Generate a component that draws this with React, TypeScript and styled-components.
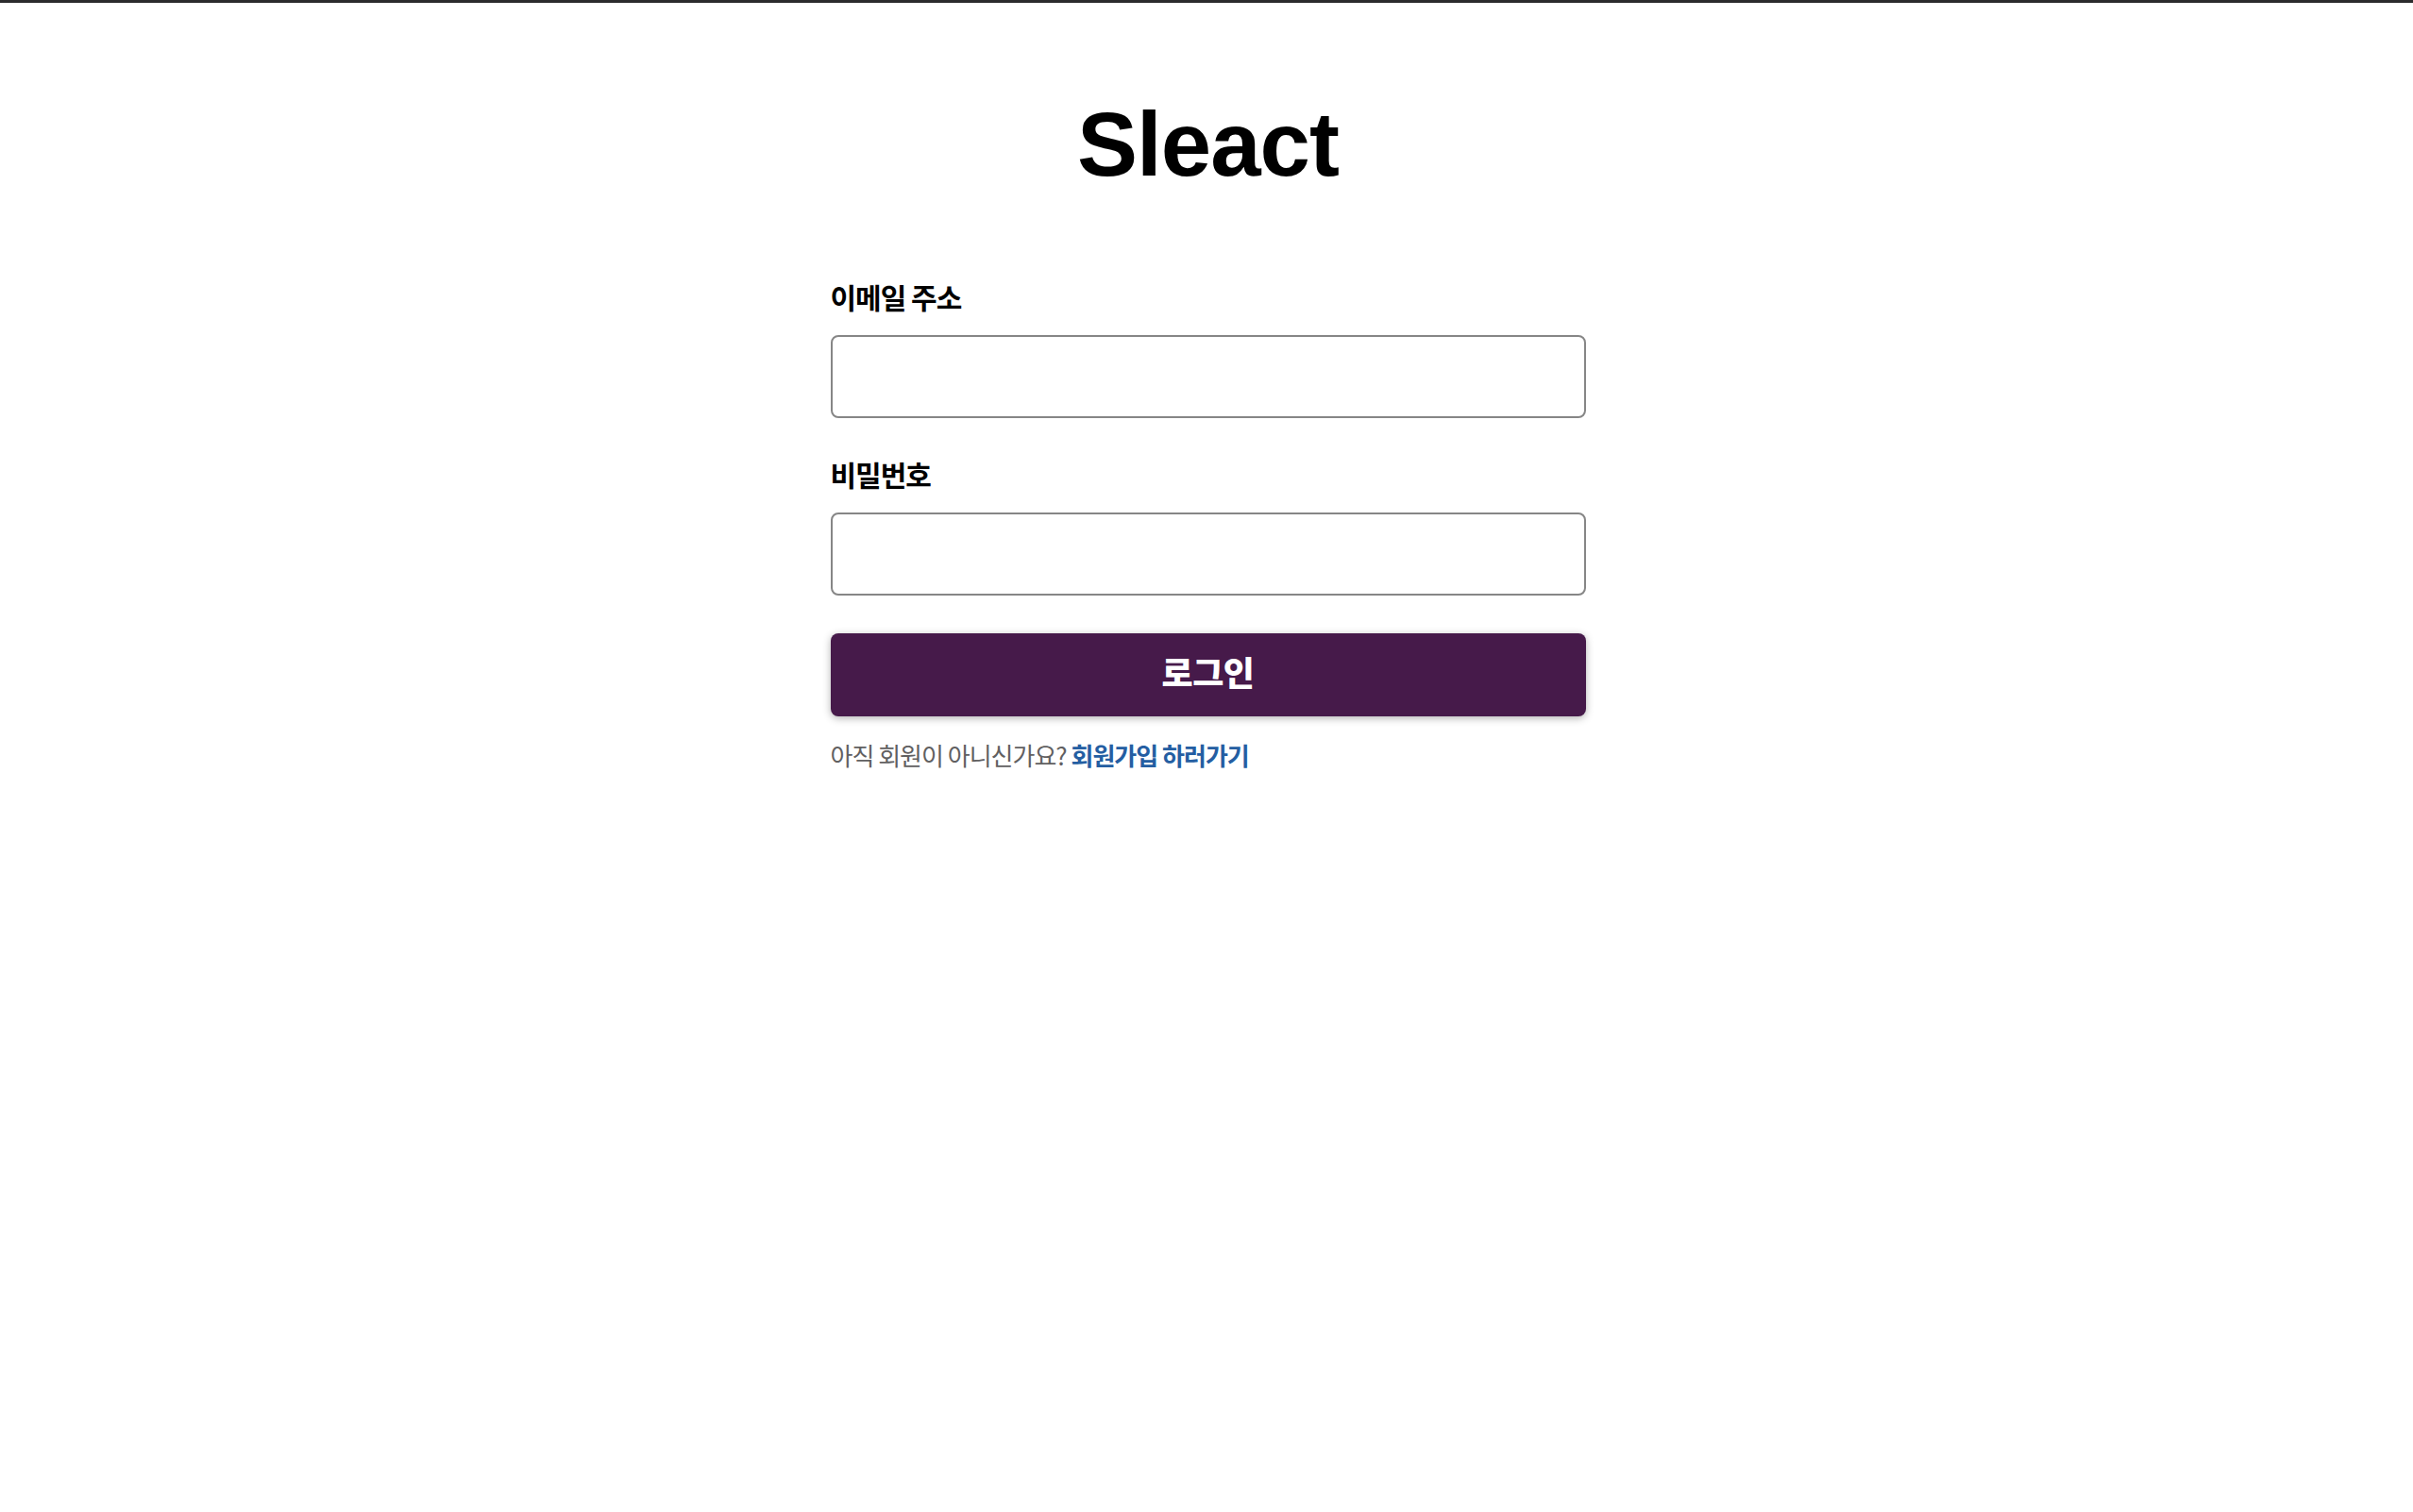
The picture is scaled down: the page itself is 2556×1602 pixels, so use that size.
import React from 'react';
import styled, { createGlobalStyle } from 'styled-components';

const GlobalStyle = createGlobalStyle`
  html, body {
    margin: 0;
    padding: 0;
    background: #ffffff;
  }
  body {
    font-family: "Noto Sans CJK KR", "Noto Sans", sans-serif;
    color: #1d1c1d;
  }
  * { box-sizing: border-box; }
`;

const Page = styled.div`
  border-top: 3px solid #2b2b2d;
  min-height: 1602px;
  background: #ffffff;
  padding-left: 3px;
`;

const Header = styled.header`
  text-align: center;
  font-family: "Liberation Sans", Arial, sans-serif;
  font-weight: 700;
  font-size: 96px;
  line-height: 92px;
  letter-spacing: -1px;
  color: #000;
  margin: 104px 0 96px;
`;

const Form = styled.form`
  margin: 0 auto;
  width: 800px;
  max-width: 800px;
`;

const Label = styled.label`
  display: block;
  & > span {
    display: block;
    text-align: left;
    padding-bottom: 21px;
    font-size: 30px;
    line-height: 39px;
    font-weight: 700;
    letter-spacing: -1px;
    color: #000;
    cursor: pointer;
  }
`;

const Input = styled.input`
  display: block;
  border-radius: 8px;
  border: 2px solid rgb(134, 134, 134);
  margin: 0 0 40px;
  width: 100%;
  height: 88px;
  padding: 22px 24px 26px;
  font-size: 36px;
  line-height: 1.333;
  color: rgb(29, 28, 29);
  background: #fff;
  outline: none;
  font-family: "Noto Sans CJK KR", sans-serif;
`;

const Button = styled.button`
  display: block;
  margin-bottom: 24px;
  width: 100%;
  height: 88px;
  color: #fff;
  background-color: #461a4a;
  border: none;
  border-radius: 8px;
  font-family: "Noto Sans CJK KR", sans-serif;
  font-size: 36px;
  font-weight: 900;
  letter-spacing: -0.5px;
  padding: 0 32px 9px;
  cursor: pointer;
  box-shadow: 0 2px 8px rgba(0, 0, 0, 0.3);
`;

const LinkContainer = styled.p`
  font-size: 26px;
  letter-spacing: -1px;
  color: #616061;
  margin: -2px auto 16px;
  width: 800px;
  max-width: 800px;
  font-family: "Noto Sans CJK KR", sans-serif;
  & a {
    color: #245ea2;
    text-decoration: none;
    font-weight: 700;
  }
`;

export default function App() {
  return (
    <>
      <GlobalStyle />
      <Page>
        <Header>Sleact</Header>
        <Form onSubmit={(e) => e.preventDefault()}>
          <Label id="email-label">
            <span>이메일 주소</span>
            <div>
              <Input type="email" id="email" name="email" />
            </div>
          </Label>
          <Label id="password-label">
            <span>비밀번호</span>
            <div>
              <Input type="password" id="password" name="password" />
            </div>
          </Label>
          <Button type="submit">로그인</Button>
        </Form>
        <LinkContainer>
          아직 회원이 아니신가요?&nbsp;
          <a href="#signup">회원가입 하러가기</a>
        </LinkContainer>
      </Page>
    </>
  );
}
